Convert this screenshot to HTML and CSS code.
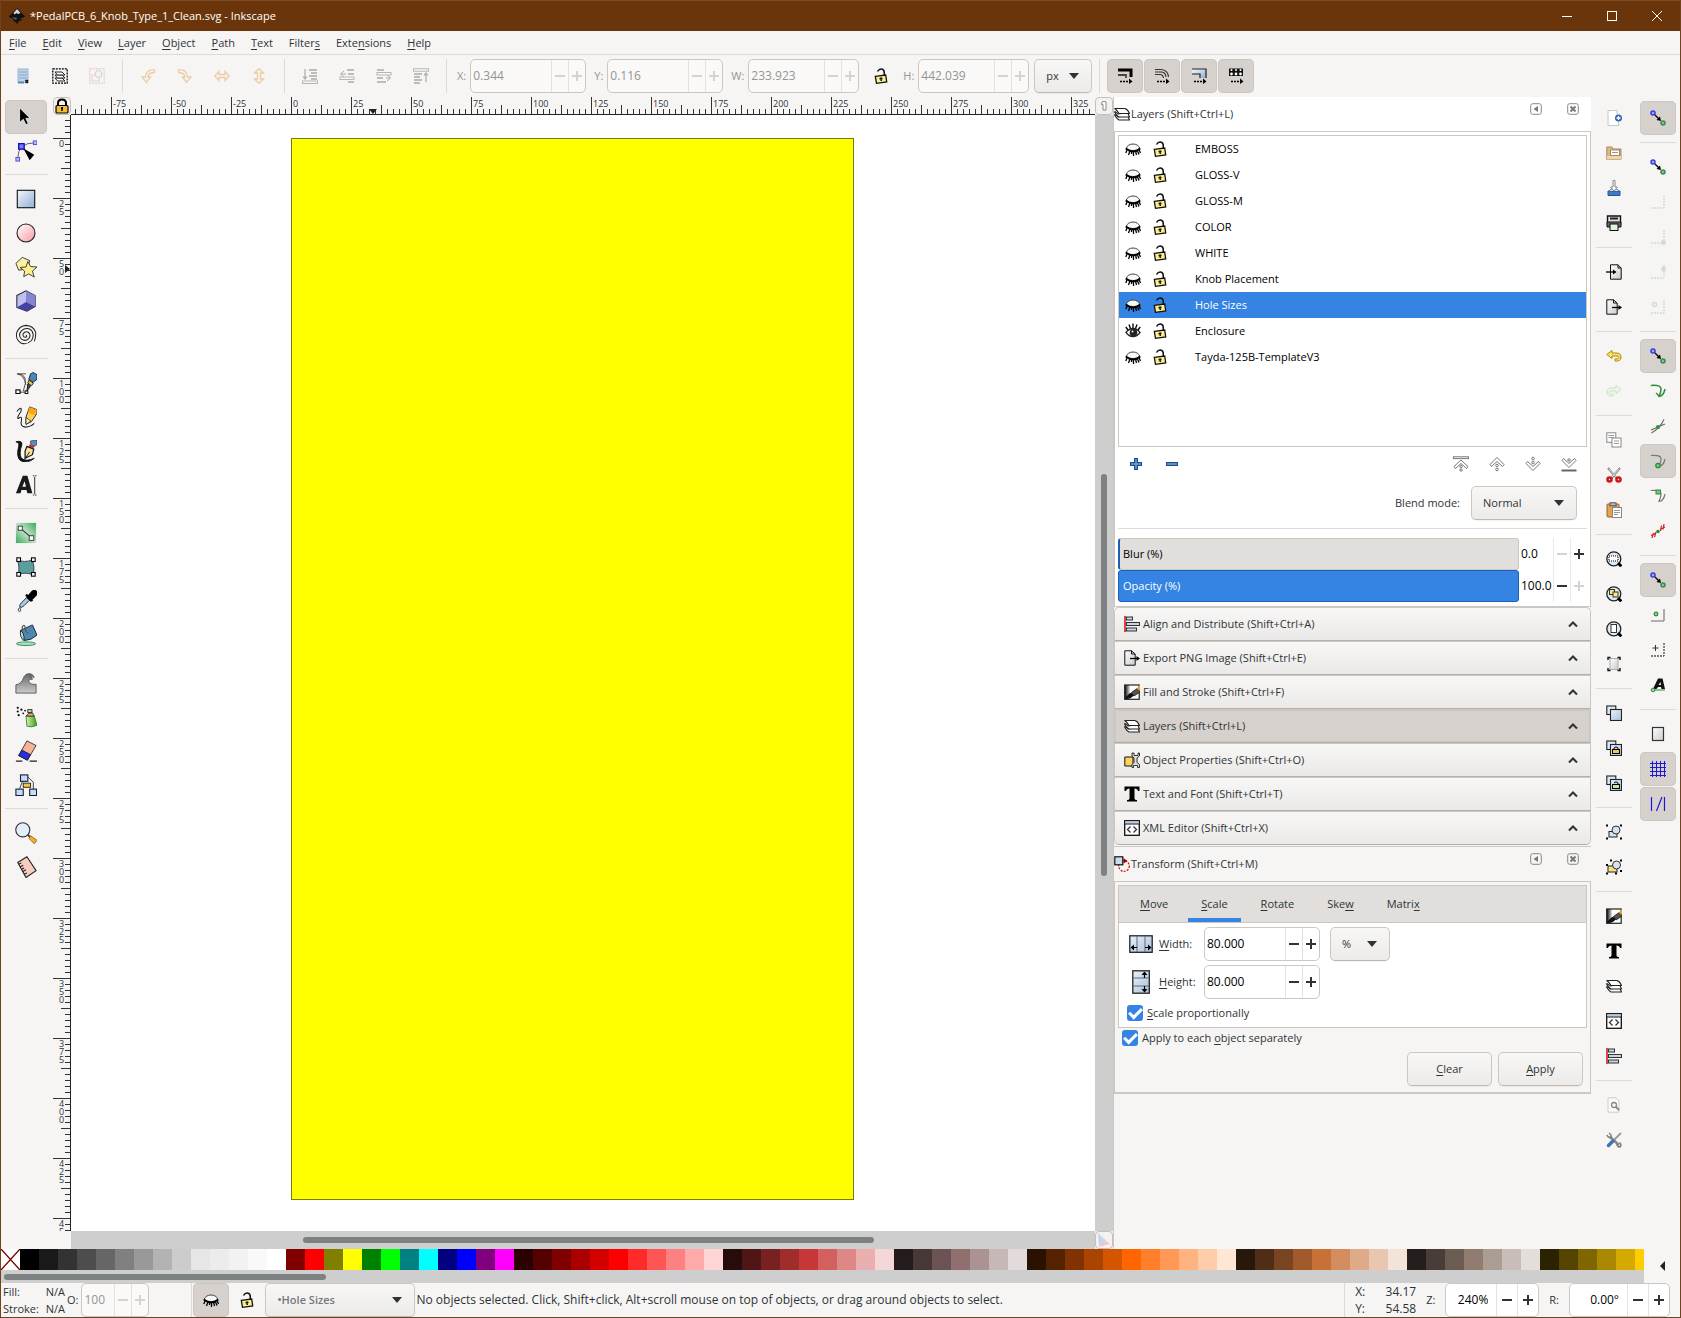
FILE: index.html
```html
<!DOCTYPE html>
<html lang="en">
<head>
<meta charset="utf-8">
<title>*PedalPCB_6_Knob_Type_1_Clean.svg - Inkscape</title>
<link rel="stylesheet" href="styles.css">
</head>
<body>
<svg class="defs" aria-hidden="true">
  <defs>
    <linearGradient id="gBlue" x1="1" y1="0" x2="0" y2="1"><stop offset="0" stop-color="#eef4fa"/><stop offset="1" stop-color="#8fb0d3"/></linearGradient>
    <linearGradient id="gRect" x1="0" y1="0" x2="1" y2="1"><stop offset="0" stop-color="#f4f8fc"/><stop offset="1" stop-color="#8fb0d3"/></linearGradient>
    <linearGradient id="gSky" x1="0" y1="0" x2="1" y2="1"><stop offset="0" stop-color="#e9f1f9"/><stop offset="1" stop-color="#a9c1dc"/></linearGradient>
    <linearGradient id="gPink" x1="0" y1="0" x2="1" y2="1"><stop offset="0" stop-color="#fff"/><stop offset="1" stop-color="#f59aa5"/></linearGradient>
    <linearGradient id="gGreen" x1="0" y1="1" x2="1" y2="0"><stop offset="0" stop-color="#3fa85f"/><stop offset=".5" stop-color="#bfe3c8"/><stop offset="1" stop-color="#3fa85f"/></linearGradient>
    <linearGradient id="gGray" x1="0" y1="0" x2="0" y2="1"><stop offset="0" stop-color="#666"/><stop offset="1" stop-color="#ccc"/></linearGradient>
    <linearGradient id="gPaper" x1="0" y1="0" x2="1" y2="1"><stop offset="0" stop-color="#fff"/><stop offset="1" stop-color="#ccc"/></linearGradient>
    <linearGradient id="gFill" x1="0" y1="0" x2="1" y2="0"><stop offset="0" stop-color="#000"/><stop offset=".4" stop-color="#fff"/></linearGradient>
    <linearGradient id="gSpray" x1="0" y1="0" x2="1" y2="0"><stop offset="0" stop-color="#d8f3b8"/><stop offset="1" stop-color="#3f9a08"/></linearGradient>
  </defs>
  <symbol id="eye-closed" viewBox="0 0 16 16"><path d="M1 7.500Q3 3 8 3T15 7.500Q12 9.600 8 9.600T1 7.500Z" fill="#f8f8f8" stroke="#444"/><path d="M.8 7.500Q4 10.300 8 10.300T15.200 7.500" fill="none" stroke="#000" stroke-width="1.800"/><path d="M2 9L.8 12M5 10L3.500 14M6.800 10L6.500 13M8.500 10V15M10.500 10L11.500 14M12.300 9.500L14 13.500M14 8.500L15.500 12" stroke="#000" stroke-width="1.300"/></symbol>
  <symbol id="eye-open" viewBox="0 0 16 16"><path d="M1 9.500Q4 5.500 8 5.500T15 9.500Q12 13.500 8 13.500T1 9.500Z" fill="#fff" stroke="#222" stroke-width="1.300"/><circle cx="8.500" cy="9.500" r="3.800" fill="#222"/><circle cx="7.500" cy="8.500" r="1" fill="#fff"/><path d="M3 7L.8 4M5.500 5.500L4 1.500M8 5V.5M10.500 5.500L12 1.500M13 7L15.200 4" stroke="#000" stroke-width="1.300"/></symbol>
  <symbol id="lock-open" viewBox="0 0 16 16"><path d="M4.500 3.500Q6 .8 8.500 1Q11.500 1.500 11.300 5V7.500" fill="none" stroke="#111" stroke-width="1.500"/><path d="M2.300 8.300L12.700 7L13.700 14L3.500 15.300Z" fill="#fdf08a" stroke="#111" stroke-width="1.300"/><path d="M8 9.500L8.300 13M6.500 10.700L9.500 10.400" stroke="#111" stroke-width="1.500"/></symbol>
  <symbol id="lock" viewBox="0 0 16 16"><path d="M4 8V5Q4 1.500 8 1.500T12 5V8" fill="none" stroke="#000" stroke-width="2"/><rect x="2" y="7.500" width="12" height="7.500" rx="1" fill="#f2bb35" stroke="#000" stroke-width="1.200"/><path d="M8 9V13M7 10.200H9" stroke="#000" stroke-width="1.500"/></symbol>
  <symbol id="layers" viewBox="0 0 16 16"><g fill="#fff" stroke="#222" stroke-width="1.100" stroke-linejoin="round"><path d="M.8 8.500Q3 9.500 4 11Q10 9.500 14 10.500L15.500 14H5Q3 13 .8 9.500Z"/><path d="M.8 5.500Q3 6.500 4 8Q10 6.500 14 7.500L15.500 11H5Q3 10 .8 6.500Z"/><path d="M.8 2.500H11Q14 3.500 15.500 7.500H5Q3 4 .8 2.500Z"/></g></symbol>
  <symbol id="sel-all" viewBox="0 0 16 16"><rect x=".8" y=".8" width="14.400" height="14.400" fill="none" stroke="#000" stroke-width="1.300" stroke-dasharray="2 1"/><g fill="#fff" stroke="#222"><path d="M3 10H10L13 13H5.500Z"/><path d="M3 7H10L13 10H5.500Z"/><path d="M3 4H10L13 7H5.500Z"/></g></symbol>
  <symbol id="doc-blue" viewBox="0 0 16 16"><rect x="3" y="1" width="10" height="13" fill="#bdd3ea" stroke="#9fb6cf"/><path d="M4 4H12M4 7H12M4 10H12" stroke="#86a5c8"/><path d="M3 14.500H9" stroke="#5b87bd" stroke-width="2"/><path d="M10.500 12L13 15M13 12L10.500 15" stroke="#111" stroke-width="1.400"/></symbol>
  <symbol id="desel" viewBox="0 0 16 16"><rect x=".8" y=".8" width="14.400" height="14.400" fill="none" stroke="#c66" stroke-dasharray="2 1"/><rect x="3" y="7" width="7" height="6" fill="#fff5dd" stroke="#b98"/><circle cx="9.500" cy="6" r="3.500" fill="#eee" stroke="#888"/></symbol>
  <symbol id="rot-l" viewBox="0 0 16 16"><path d="M14.500 2Q6 1 5.500 9H2L6.500 14.500L10.500 9H8Q8 5 14.500 4.500Z" fill="#fff0dc" stroke="#d9821f" stroke-width="1.300"/></symbol>
  <symbol id="rot-r" viewBox="0 0 16 16"><path d="M1.500 2Q10 1 10.500 9H14L9.500 14.500L5.500 9H8Q8 5 1.500 4.500Z" fill="#fff0dc" stroke="#d9821f" stroke-width="1.300"/></symbol>
  <symbol id="flip-h" viewBox="0 0 16 16"><path d="M.8 8L5 3.500V6.500H11V3.500L15.200 8L11 12.500V9.500H5V12.500Z" fill="#fff0dc" stroke="#d9821f" stroke-width="1.300"/></symbol>
  <symbol id="flip-v" viewBox="0 0 16 16"><path d="M8 .8L3.500 5H6.500V11H3.500L8 15.200L12.500 11H9.500V5H12.500Z" fill="#fff0dc" stroke="#d9821f" stroke-width="1.300"/></symbol>
  <symbol id="to-bottom" viewBox="0 0 16 16"><path d="M3 1V11M1 8.500L3 11L5 8.500" fill="none" stroke="#222" stroke-width="1.200"/><path d="M7 2H15M9 5H15M7 8H15M9 11H15" stroke="#555" stroke-width="2"/><rect x=".5" y="13" width="15" height="2.500" fill="#fff" stroke="#444"/></symbol>
  <symbol id="lower" viewBox="0 0 16 16"><path d="M5 3L1.500 6L5 9M2 6H7" fill="none" stroke="#222"/><path d="M8 2H15M9 6H15M9 14H15" stroke="#555" stroke-width="2"/><rect x="1" y="9" width="14" height="2.500" fill="#fff" stroke="#444"/></symbol>
  <symbol id="raise" viewBox="0 0 16 16"><path d="M11 7L14.500 10L11 13M10 10H14" fill="none" stroke="#222"/><path d="M1 2H8M1 10H7M1 14H10" stroke="#555" stroke-width="2"/><rect x="1" y="4.500" width="14" height="2.500" fill="#fff" stroke="#444"/></symbol>
  <symbol id="to-top" viewBox="0 0 16 16"><path d="M13 14V5M11 7.500L13 5L15 7.500" fill="none" stroke="#222" stroke-width="1.200"/><path d="M1 6H9M1 9H7M1 12H9M1 15H7" stroke="#555" stroke-width="2"/><rect x=".5" y=".7" width="15" height="2.500" fill="#fff" stroke="#444"/></symbol>
  <symbol id="aff-stroke" viewBox="0 0 16 16"><path d="M1 2H14V9" fill="none" stroke="#000" stroke-width="3"/><path d="M1 7H9V10" fill="none" stroke="#444" stroke-width="1.800"/><path d="M3 13.500H12" stroke="#000" stroke-width="1.600" stroke-dasharray="2 1"/><path d="M12 10.500L15.500 13.500L12 16Z"/></symbol>
  <symbol id="aff-corner" viewBox="0 0 16 16"><path d="M1 1.500H7Q14 2 14.500 9M1 6.500H6Q9 6.500 9.500 10M1 4H7Q11.500 4 12 9" fill="none" stroke="#333" stroke-width="1.100"/><path d="M3 13.500H12" stroke="#000" stroke-width="1.600" stroke-dasharray="2 1"/><path d="M12 10.500L15.500 13.500L12 16Z"/></symbol>
  <symbol id="aff-grad" viewBox="0 0 16 16"><path d="M1 1H15V10H9V6H1Z" fill="url(#gRect)"/><path d="M1 1H15V10M1 6H9V10" fill="none" stroke="#222" stroke-width="1.200"/><path d="M3 13.500H12" stroke="#000" stroke-width="1.600" stroke-dasharray="2 1"/><path d="M12 10.500L15.500 13.500L12 16Z"/></symbol>
  <symbol id="aff-patt" viewBox="0 0 16 16"><path d="M1 .5H15V8H1Z" fill="#111"/><g fill="#fff"><circle cx="3.500" cy="2" r="1"/><circle cx="8" cy="2" r="1"/><circle cx="12.500" cy="2" r="1"/><circle cx="3.500" cy="6" r="1.400"/><circle cx="8" cy="6" r="1.400"/><circle cx="12.500" cy="6" r="1.400"/></g><path d="M3 13.500H12" stroke="#000" stroke-width="1.600" stroke-dasharray="2 1"/><path d="M12 10.500L15.500 13.500L12 16Z"/></symbol>

  <symbol id="t-select" viewBox="0 0 24 24"><path d="M5 2V18L9 14.500L12 20.500L14.500 19L11.800 13.500H16.500Z" fill="#000" stroke="#fff" stroke-width=".8"/></symbol>
  <symbol id="t-node" viewBox="0 0 24 24"><path d="M3 20Q3 3 22 3" fill="none" stroke="#555"/><g fill="#b8b8ff" stroke="#4a4ad8"><rect x="1" y="19" width="4" height="4"/><rect x="20" y="1" width="4" height="4"/></g><rect x="4" y="4" width="6" height="6" fill="#7a7af0" stroke="#1010d0" stroke-width="1.500"/><path d="M9 9L21 16L16 22Z"/></symbol>
  <symbol id="t-rect" viewBox="0 0 24 24"><rect x="2.500" y="2.500" width="19" height="19" fill="url(#gRect)" stroke="#111" stroke-width="1.200"/></symbol>
  <symbol id="t-ellipse" viewBox="0 0 24 24"><circle cx="12" cy="12" r="9.800" fill="url(#gPink)" stroke="#222" stroke-width="1.200"/></symbol>
  <symbol id="t-star" viewBox="0 0 24 24"><g stroke="#333" stroke-linejoin="round"><path d="M1 8L8 1.500L16 5L14 14L4 15.500Z" fill="#fdf2a0"/><path d="M14 6L17 11.500L24 12L19 16.500L21 23L15 19.500L9.500 22.500L10.500 16.500L5.500 12.500L12 12Z" fill="#fdf08c"/></g></symbol>
  <symbol id="t-box" viewBox="0 0 24 24"><path d="M2 6L12 1L22 6V18L13 23L2 19Z" fill="#c0c0ee" stroke="#223" stroke-width="1.100"/><path d="M12 1V13L22 18V6Z" fill="#8585d0"/><path d="M12 13L22 18L13 23L2 19Z" fill="#4343a0"/></symbol>
  <symbol id="t-spiral" viewBox="0 0 24 24"><path d="M12 12Q14 14 11 14.500Q8 14 9 10.500Q11 7.500 14.500 9Q18 12 15 16Q11 19.500 7 16.500Q3 12 7 7.500Q12 3 17.500 6.500Q22 11 18 18Q13 23 7 21Q0 17 2 9Q5 2 12 1.500Q20 2 22.500 9Q23 14 21 19" fill="none" stroke="#222" stroke-width="1.100"/></symbol>
  <symbol id="t-pen" viewBox="0 0 24 24"><path d="M3 2Q16 2 9 21M2 2Q10 3 12 14M5 22H12M3 2H12" fill="none" stroke="#444"/><rect x="1" y="19.500" width="4.500" height="4" fill="#fff" stroke="#000" stroke-width="1.200"/><rect x="11" y="20.500" width="3" height="3" fill="#fff" stroke="#000"/><path d="M17 2L20 .5L24 3V8L20 11L15 8Z" fill="#4a87b8" stroke="#123"/><path d="M15 9L20 12L18 15L14 12Z" fill="#f3d344" stroke="#222"/><path d="M14 13L17 15L13 21Z" fill="#555" stroke="#111"/></symbol>
  <symbol id="t-pencil" viewBox="0 0 24 24"><path d="M2 6Q8 -1 6.500 6Q1 14 4 13.500Q8 10 7 16Q5 22 11 23Q17 23 21 19" fill="none" stroke="#222" stroke-width="1.200"/><path d="M16 1L24 4V8L18 17L12 20V12Z" fill="#fbd34c" stroke="#222"/><path d="M16 1L24 4L21 10L14 7Z" fill="#f9a51a"/><path d="M12 12.500L17.500 16.500L12 20Z" fill="#fbeacb" stroke="#222" stroke-width=".8"/></symbol>
  <symbol id="t-callig" viewBox="0 0 24 24"><path d="M1 2Q8 0 7.500 5Q4 15 7 20Q12 24 21 20Q14 26 6 22.500Q1 18 4 7Q5 3 1 2Z" fill="#111" stroke="#111"/><path d="M17 1L24 0V5L21 7L17 5Z" fill="#5a8fbb" stroke="#111" stroke-width=".6"/><path d="M16 5L21 7L20 9L15 7Z" fill="#c22"/><path d="M13 7L20.500 10L19 16L11 20L11 12Z" fill="#fbe0a0" stroke="#111" stroke-width="1.300"/><path d="M11 20L16 13" stroke="#111"/></symbol>
  <symbol id="t-text" viewBox="0 0 24 24"><path d="M1 21L8.500 2H13.500L19 21H13.500L12.500 17.500H7L6 21ZM8 14H12L10.500 8Z" fill="#1a1a1a" fill-rule="evenodd"/><path d="M21.500 3V22M19.500 2H21M22 2H23.500M19.500 23H21M22 23H23.500" stroke="#333" stroke-width="1.100"/></symbol>
  <symbol id="t-grad" viewBox="0 0 24 24"><rect x="1" y="1" width="22" height="22" fill="url(#gGreen)"/><path d="M6 7L18 17" stroke="#333" stroke-width="1.200"/><rect x="3.500" y="4.500" width="4.500" height="4.500" fill="#fff" stroke="#333"/><rect x="15.500" y="15" width="5" height="5" fill="#fff" stroke="#333"/></symbol>
  <symbol id="t-mesh" viewBox="0 0 24 24"><path d="M3 4Q10 8 19 4Q22 12 20 21Q13 17 4 20Q5 12 3 4Z" fill="#5a9f9d" stroke="#345"/><g fill="#fff" stroke="#000" stroke-width="1.200"><rect x="2" y="2" width="4" height="4"/><rect x="18" y="2" width="4" height="4"/><rect x="2" y="18" width="4" height="4"/><rect x="18" y="18" width="4" height="4"/></g></symbol>
  <symbol id="t-drop" viewBox="0 0 24 24"><path d="M13 8L7 14Q4 17 5.500 18.500Q7 20 10 17L16 11Z" fill="#a8c8e4" stroke="#123"/><path d="M12 5L19 12M14 8L19 2Q21 0 23 2Q24 4 22 6L17 11Z" stroke="#000" stroke-width="2.500"/><path d="M5 19Q7.500 23 5 23.500Q2 23 5 19Z" fill="#cfe3f5" stroke="#345"/></symbol>
  <symbol id="t-bucket" viewBox="0 0 24 24"><ellipse cx="12" cy="21.500" rx="10.500" ry="2" fill="#a9e0bd" stroke="#385"/><path d="M7 20V11L11 19Z" fill="#a9e0bd"/><path d="M6 7L19 1L24 12Q18 18 10 18Z" fill="#4f86ad" stroke="#123"/><path d="M6 7Q10 9 10 18Q5 15 6 7Z" fill="#b9e7c8" stroke="#123"/><path d="M8 8V3Q10 0 11 3Q11 8 14 10" fill="none" stroke="#555" stroke-width="1.300"/></symbol>
  <symbol id="t-tweak" viewBox="0 0 24 24"><path d="M1 23V14Q7 13 9 7Q11 1 17 2Q20 3 21 6Q18 4 16 5.500Q19 5.500 19 8Q15 7 15 10Q16 14 23 13.500V23Z" fill="url(#gGray)" stroke="#555"/></symbol>
  <symbol id="t-spray" viewBox="0 0 24 24"><path d="M12 11H21L24 21Q18 24 13 22Z" fill="url(#gSpray)" stroke="#384"/><path d="M13 10Q14 7 19 7.500L21 11H12Z" fill="#f0a848" stroke="#333"/><rect x="14" y="4" width="4.500" height="3" fill="#ddd" stroke="#222"/><g fill="#111"><circle cx="3" cy="2" r="1.200"/><circle cx="7" cy="4" r="1.200"/><circle cx="3" cy="6" r="1.200"/><circle cx="11" cy="5" r="1"/><circle cx="4" cy="10" r="1.200"/><circle cx="9" cy="8" r="1"/></g></symbol>
  <symbol id="t-eraser" viewBox="0 0 24 24"><path d="M13 1L23 6L13.500 22L4 17Z" fill="#f4b49a" stroke="#333"/><path d="M7.500 11L17 16L13.500 22L4 17Z" fill="#2b2bea" stroke="#222"/><path d="M1 23H8M16 23H24" stroke="#222" stroke-width="1.200"/></symbol>
  <symbol id="t-conn" viewBox="0 0 24 24"><path d="M9 6L5 16M11 4H15L20 9V17" fill="none" stroke="#333"/><g fill="#c9dcf3" stroke="#123" stroke-width="1.200"><rect x="6" y="1" width="8" height="7"/><rect x="1" y="16.500" width="8" height="7"/><rect x="16" y="16.500" width="7.500" height="7"/></g><rect x="9" y="10" width="8" height="4.500" fill="#fbc33c" stroke="#222"/></symbol>
  <symbol id="t-zoom" viewBox="0 0 24 24"><circle cx="8.500" cy="8.500" r="7.700" fill="#e4eefa" stroke="#333" stroke-width="1.200"/><path d="M14 14L17 17" stroke="#333" stroke-width="2"/><path d="M17 15L24 20L21 23.800L15.500 18Z" fill="#f8ae24" stroke="#963"/></symbol>
  <symbol id="t-measure" viewBox="0 0 24 24"><path d="M13 .8L23 16L12 23.500L3 7Z" fill="#f8cdbd" stroke="#222" stroke-width="1.200"/><path d="M4 9L7 7.500M5.500 12L9 10M7 14.500L10 13M8.500 17L12 15M10 20L13 18.500" stroke="#222" stroke-width="1.200"/></symbol>

  <symbol id="c-new" viewBox="0 0 16 16"><path d="M2 .5H11V6L13 15.500H2Z" fill="#fff" stroke="#c8c8c8"/><circle cx="12.500" cy="8" r="3.500" fill="#2f68ad"/><path d="M12.500 6V10M10.500 8H14.500" stroke="#fff" stroke-width="1.300"/></symbol>
  <symbol id="c-open" viewBox="0 0 16 16"><path d="M.8 2H6L7 4H15V14.500H.8Z" fill="#d9b98c" stroke="#a98a5e"/><rect x="4.500" y="5" width="9" height="5.500" fill="#fff" stroke="#a98a5e"/><path d="M6 7.500H12" stroke="#999"/><path d="M1 11H15V14.500H1Z" fill="#efd6ae"/></symbol>
  <symbol id="c-save" viewBox="0 0 16 16"><path d="M2 11H14V15.500H2Z" fill="#3d7cc9" stroke="#28568f"/><path d="M3 11L5 9H11L13 11" fill="#c9dcf3" stroke="#789"/><path d="M7 .5H9V7H11.500L8 11L4.500 7H7Z" fill="#fff" stroke="#888"/></symbol>
  <symbol id="c-print" viewBox="0 0 16 16"><path d="M1.500 1H14.500V9H1.500Z" fill="#ddd" stroke="#111" stroke-width="1.400"/><path d="M4 3.500H12" stroke="#222" stroke-width="2"/><path d="M1 7H15V12H1Z" fill="#666" stroke="#111"/><rect x="4" y="9" width="8" height="6.500" fill="#e3f2df" stroke="#111"/></symbol>
  <symbol id="c-import" viewBox="0 0 16 16"><path d="M4.500 .8H12L15.200 4V15.200H4.500Z" fill="url(#gPaper)" stroke="#111"/><path d="M12 .8V4H15" fill="none" stroke="#111"/><path d="M0 8H9" stroke="#000" stroke-width="1.300"/><path d="M7 5.500L10.500 8L7 10.500Z"/></symbol>
  <symbol id="c-export" viewBox="0 0 16 16"><path d="M.8 .8H7.500L11.200 4V15.200H.8Z" fill="url(#gPaper)" stroke="#111"/><path d="M7.500 .8V4H11" fill="none" stroke="#111"/><path d="M6 8.500H14" stroke="#000" stroke-width="1.300"/><path d="M12.500 6L16 8.500L12.500 11Z"/></symbol>
  <symbol id="c-undo" viewBox="0 0 16 16"><path d="M6 2.500V5H11Q15.500 5.500 15 10Q14.500 13.500 9 13V11Q12.500 11.500 12.800 9.500Q13 8 11 8H6V10.500L.8 6.500Z" fill="#f6e27a" stroke="#b08d00"/></symbol>
  <symbol id="c-redo" viewBox="0 0 16 16"><path d="M10 2.500V5H5Q.5 5.500 1 10Q1.500 13.500 7 13V11Q3.500 11.500 3.200 9.500Q3 8 5 8H10V10.500L15.200 6.500Z" fill="#edf7ea" stroke="#c5e3be"/></symbol>
  <symbol id="c-copy" viewBox="0 0 16 16"><g fill="#fff" stroke="#888"><rect x=".8" y=".8" width="9" height="9.500"/><rect x="6" y="6" width="9" height="9"/></g><path d="M2.500 3.500H8M2.500 5.500H8M8 9H13M8 11.500H13" stroke="#999"/></symbol>
  <symbol id="c-cut" viewBox="0 0 16 16"><path d="M2 1L10.500 11M14 1L5.500 11" stroke="#888" stroke-width="2"/><path d="M3 2L10 10M13 2L6 10" stroke="#eee" stroke-width=".8"/><g fill="none" stroke="#d01818" stroke-width="2.600"><circle cx="3.500" cy="12.500" r="2"/><circle cx="12.500" cy="12.500" r="2"/></g></symbol>
  <symbol id="c-paste" viewBox="0 0 16 16"><rect x="1" y="2" width="12" height="13" rx="1" fill="#e3a54e" stroke="#96652a"/><rect x="4" y=".8" width="6" height="3" fill="#bbb" stroke="#555"/><rect x="6.500" y="5.500" width="9" height="10" fill="#fff" stroke="#888"/><path d="M8 8.500H14M8 10.500H14M8 12.500H12" stroke="#999"/></symbol>
  <symbol id="zoom-base" viewBox="0 0 16 16"><circle cx="7.800" cy="7.800" r="7" fill="#dfeaf5" stroke="#222" stroke-width="1.300"/><path d="M12 12L15.300 15.300" stroke="#000" stroke-width="3"/></symbol>
  <symbol id="c-zsel" viewBox="0 0 16 16"><use href="#zoom-base"/><rect x="3" y="5" width="9" height="5" fill="#fff" stroke="#000" stroke-dasharray="1 1"/></symbol>
  <symbol id="c-zdraw" viewBox="0 0 16 16"><use href="#zoom-base"/><g fill="#fbe68a" stroke="#333"><rect x="3.500" y="3.500" width="5" height="5"/><rect x="7" y="6" width="5" height="5"/></g></symbol>
  <symbol id="c-zpage" viewBox="0 0 16 16"><use href="#zoom-base"/><rect x="5" y="3.500" width="5.500" height="8" fill="#fff" stroke="#333"/></symbol>
  <symbol id="c-zwidth" viewBox="0 0 16 16"><rect x="4" y="2.500" width="8" height="11" fill="url(#gPaper)" stroke="#aaa"/><path d="M2 4V1.500H4.500M11.500 1.500H14V4M2 12V14.500H4.500M11.500 14.500H14V12" fill="none" stroke="#111" stroke-width="1.400"/></symbol>
  <symbol id="c-dup" viewBox="0 0 16 16"><g fill="#dbe7f4" stroke="#222" stroke-width="1.100"><rect x=".8" y="1" width="9" height="8.500"/><rect x="4.500" y="4.500" width="11" height="11" fill="url(#gSky)"/></g></symbol>
  <symbol id="c-clone" viewBox="0 0 16 16"><use href="#c-dup"/><path d="M8 10V8Q10 5.500 12 8V10" fill="none" stroke="#000"/><rect x="6.500" y="9.500" width="7" height="4" fill="#f5c64a" stroke="#000"/></symbol>
  <symbol id="c-unclone" viewBox="0 0 16 16"><use href="#c-dup"/><path d="M8 8Q10 5.500 12 8V10" fill="none" stroke="#000"/><rect x="6.500" y="9.500" width="7" height="4" fill="#c9e4a0" stroke="#000"/></symbol>
  <symbol id="c-group" viewBox="0 0 16 16"><rect x="3" y="7.500" width="8" height="5.500" fill="#d4e2f2" stroke="#222"/><circle cx="10" cy="6" r="4" fill="#d4e2f2" stroke="#333"/><path d="M0 1.500H2M14 1.500H16M0 14.500H2M14 14.500H16" stroke="#000" stroke-width="2"/></symbol>
  <symbol id="c-ungroup" viewBox="0 0 16 16"><rect x="2" y="7" width="9" height="6" fill="#fbe07a" stroke="#222"/><circle cx="10.500" cy="6" r="4" fill="#d4e2f2" stroke="#333"/><path d="M0 6H2M14 1.500H16M4 1.500H6M0 14.500H2M9 14.500H11M14 12H16" stroke="#000" stroke-width="2"/></symbol>
  <symbol id="c-fill" viewBox="0 0 16 16"><rect x=".7" y="1" width="14.500" height="14.300" fill="url(#gFill)" stroke="#222" stroke-width="1.200"/><path d="M1 15Q3 11 6 9Q8 8.500 10 11Q7 15.500 1 15Z" fill="#111"/><path d="M7.500 8.500L14 4L16 6V8L10 12Z" fill="#555" stroke="#111" stroke-width=".8"/><path d="M16 1V7L13 4.500Z" fill="#f2a81c"/></symbol>
  <symbol id="c-text" viewBox="0 0 16 16"><path d="M.5 .5H15.500V5H14Q13.500 2.500 10.500 2.500V12.500Q10.500 14 13 14V15.500H3V14Q5.500 14 5.500 12.500V2.500Q2.500 2.500 2 5H.5Z"/></symbol>
  <symbol id="c-xml" viewBox="0 0 16 16"><rect x=".7" y=".7" width="14.600" height="14.600" fill="#fff" stroke="#111" stroke-width="1.300"/><path d="M1 2.500H15" stroke="#b7cbe3" stroke-width="2"/><path d="M1 4H15" stroke="#111"/><path d="M6.500 6.500L3.500 9.500L6.500 12.500M9.500 6.500L12.500 9.500L9.500 12.500" fill="none" stroke="#333" stroke-width="1.300"/></symbol>
  <symbol id="c-align" viewBox="0 0 16 16"><path d="M1 0V16" stroke="#c00" stroke-width="1.400"/><g fill="#c4d6e8" stroke="#333"><rect x="2.500" y="1" width="6" height="3"/><rect x="2.500" y="6.500" width="13" height="3"/><rect x="2.500" y="12" width="10" height="3"/></g></symbol>
  <symbol id="c-docprop" viewBox="0 0 16 16"><path d="M2 .8H10L13 4V15.200H2Z" fill="#fafafa" stroke="#ccc"/><circle cx="8" cy="8" r="2.500" fill="none" stroke="#888" stroke-width="1.300"/><path d="M9.500 9.500L13 13" stroke="#888" stroke-width="2"/></symbol>
  <symbol id="c-prefs" viewBox="0 0 16 16"><path d="M4 5L13 13" stroke="#888" stroke-width="2.500"/><path d="M1 3Q2 6 5 5.500Q6 3 3 1M11 12Q11 15 14 15Q16 13 13.500 10.500" fill="none" stroke="#777" stroke-width="1.400"/><path d="M15 1L8 8" stroke="#999" stroke-width="1.800"/><path d="M7 9L2.500 13.500" stroke="#3f74b8" stroke-width="3.500" stroke-linecap="round"/></symbol>
  <symbol id="objprop" viewBox="0 0 16 16"><path d="M.8 5H9V14H.8Z" fill="#fbd35b" stroke="#111"/><path d="M8 1V4L10 6V10.500L8 12.500V15.500H9.500V13.500H13.500V15.500H15.500V12.500L13 10.500V6L15.500 4V1H14V3.500H10V1Z" fill="#ddd" stroke="#222" stroke-width=".9"/></symbol>
  <symbol id="transform" viewBox="0 0 16 16"><circle cx="10" cy="10" r="5.300" fill="none" stroke="#d00" stroke-width="1.200" stroke-dasharray="2 1.200"/><rect x=".8" y=".8" width="8" height="8" fill="#c9dcee" stroke="#111" stroke-width="1.200"/><path d="M9.500 2L13.500 5L9.500 7.500Z" fill="#a00"/></symbol>

  <symbol id="s-snap" viewBox="0 0 16 16"><circle cx="3" cy="3" r="2" fill="#a6a6f5" stroke="#3a3ae0" stroke-width="1.500"/><circle cx="13" cy="13" r="2" fill="#8fbf9d" stroke="#3a8a52" stroke-width="1.500"/><path d="M5 5L9 9" stroke="#000" stroke-width="1.200"/><path d="M11 11L6.500 10L10 6.500Z"/></symbol>
  <symbol id="s-box" viewBox="0 0 16 16"><path d="M14 1V14M1 14H14" fill="none" stroke="#7fa98a" stroke-width="1.500" stroke-dasharray="2 1"/></symbol>
  <symbol id="s-box2" viewBox="0 0 16 16"><use href="#s-box"/><circle cx="13.500" cy="13.500" r="2.500" fill="#7fa98a"/></symbol>
  <symbol id="s-box3" viewBox="0 0 16 16"><use href="#s-box"/><circle cx="13.500" cy="5" r="2.500" fill="#7fa98a"/></symbol>
  <symbol id="s-box4" viewBox="0 0 16 16"><use href="#s-box"/><circle cx="4.500" cy="5.500" r="2" fill="none" stroke="#7fa98a" stroke-width="1.500"/></symbol>
  <symbol id="s-path" viewBox="0 0 16 16"><path d="M.8 2.500Q11 1.500 11 6Q11 9 9 13.500M6 10Q8 11.500 9 13.500Q13.500 13 15 6" fill="none" stroke="#2a8f35" stroke-width="1.500"/></symbol>
  <symbol id="s-inter" viewBox="0 0 16 16"><path d="M1 12L15 6M1.500 15Q10 10 14 1.500" fill="none" stroke="#666" stroke-width="1.100"/><circle cx="8" cy="9" r="2" fill="#2a8f35"/></symbol>
  <symbol id="s-cusp" viewBox="0 0 16 16"><path d="M.8 2.500Q11 1.500 11 6Q11 9 9 13M9 13Q13.500 13 15 6" fill="none" stroke="#777" stroke-width="1.200"/><circle cx="8" cy="12.500" r="2.200" fill="#7fbf8a" stroke="#2a8f35" stroke-width="1.300"/></symbol>
  <symbol id="s-smooth" viewBox="0 0 16 16"><path d="M.8 2.500Q11 1.500 11 6Q11 9 9 13.500Q13.500 13 15 6" fill="none" stroke="#777" stroke-width="1.200"/><rect x="6" y="2" width="4.500" height="4" fill="#7fbf8a" stroke="#2a8f35"/></symbol>
  <symbol id="s-mid" viewBox="0 0 16 16"><path d="M1 12.500L6 10M10 6.500L15 4M3.500 10L2 15M6 9L4.500 14M11.500 2.500L10.500 8M14 1L13 6.500" stroke="#c22" stroke-width="1.200"/><circle cx="8" cy="8.500" r="1.800" fill="#2a8f35"/></symbol>
  <symbol id="s-obj" viewBox="0 0 16 16"><path d="M14 2V14M1 14H14" fill="none" stroke="#999" stroke-width="1.600"/><circle cx="6" cy="7" r="1.800" fill="#9fd3a9" stroke="#2a8f35" stroke-width="1.300"/></symbol>
  <symbol id="s-rotc" viewBox="0 0 16 16"><path d="M14 1V14M1 14H14" fill="none" stroke="#555" stroke-width="1.400" stroke-dasharray="2 1"/><path d="M5.500 3V9M2.500 6H8.500" stroke="#333"/></symbol>
  <symbol id="s-text" viewBox="0 0 16 16"><path d="M3 12L8 1.500H12.500L15 12H11.500L11 10H8L6.500 12ZM8.500 8H11L10.500 5Z" fill="#111" fill-rule="evenodd"/><path d="M3 13H15" stroke="#2a8f35"/><circle cx="3" cy="13" r="1.800" fill="#9fd3a9" stroke="#2a8f35"/></symbol>
  <symbol id="s-page" viewBox="0 0 16 16"><rect x="2.500" y="1.500" width="11" height="13" fill="url(#gPaper)" stroke="#333" stroke-width="1.200"/></symbol>
  <symbol id="s-grid" viewBox="0 0 16 16"><path d="M2.500 0V16M6.500 0V16M10.500 0V16M14.500 0V16M0 2.500H16M0 6.500H16M0 10.500H16M0 14.500H16" stroke="#1a1ad6"/></symbol>
  <symbol id="s-guide" viewBox="0 0 16 16"><path d="M1.500 1V15M14.500 1V15M6.500 15L12 1" stroke="#1a1ad6" stroke-width="1.200"/></symbol>
  <symbol id="chev" viewBox="0 0 10 10"><path d="M1 7.500L5 3.500L9 7.500" fill="none" stroke="#2e3436" stroke-width="2"/></symbol>
  <symbol id="minus" viewBox="0 0 10 10"><path d="M0 5H10" stroke="currentColor" stroke-width="2"/></symbol>
  <symbol id="plus" viewBox="0 0 10 10"><path d="M0 5H10M5 0V10" stroke="currentColor" stroke-width="2"/></symbol>
  <symbol id="iconify" viewBox="0 0 12 12"><rect x=".7" y=".7" width="10.600" height="10.600" rx="2" fill="none" stroke="#888"/><path d="M8 3V9L3.500 6Z" fill="#777"/></symbol>
  <symbol id="close-dlg" viewBox="0 0 12 12"><rect x=".7" y=".7" width="10.600" height="10.600" rx="2" fill="none" stroke="#888"/><path d="M3.500 3.500L8.500 8.500M8.500 3.500L3.500 8.500" stroke="#777" stroke-width="2"/></symbol>
</svg>

<header class="titlebar">
  <svg class="icon" viewBox="0 0 16 16"><path d="M8 0L16 8.500Q14 10.500 11 10L13 12Q10 12.500 9 14.500L8 16L6.500 14Q3 12.500 5 10.500Q1 10.500 0 8.500Z" fill="#111"/><path d="M8 1L11.500 5L9 6L7.500 5L5.500 6.500L4.500 5Z" fill="#cfd8e3"/><path d="M3 9L8 10L7 12Z" fill="#567"/></svg>
  <h1>*PedalPCB_6_Knob_Type_1_Clean.svg - Inkscape</h1>
  <div class="winbtns">
    <button aria-label="Minimize"><svg viewBox="0 0 10 10"><path d="M0 5.500H10"/></svg></button>
    <button aria-label="Maximize"><svg viewBox="0 0 10 10"><rect x=".5" y=".5" width="9" height="9"/></svg></button>
    <button aria-label="Close"><svg viewBox="0 0 10 10"><path d="M0 0L10 10M10 0L0 10"/></svg></button>
  </div>
</header>

<nav class="menubar">
  <button><u>F</u>ile</button><button><u>E</u>dit</button><button><u>V</u>iew</button><button><u>L</u>ayer</button><button><u>O</u>bject</button><button><u>P</u>ath</button><button><u>T</u>ext</button><button>Filter<u>s</u></button><button>Exte<u>n</u>sions</button><button><u>H</u>elp</button>
</nav>

<div class="toolbar">
  <button class="tool" aria-label="Select all"><svg class="icon"><use href="#doc-blue"/></svg></button>
  <button class="tool" aria-label="Select all in all layers"><svg class="icon"><use href="#sel-all"/></svg></button>
  <button class="tool" disabled aria-label="Deselect"><svg class="icon"><use href="#desel"/></svg></button>
  <i class="vsep"></i>
  <button class="tool" disabled aria-label="Rotate left"><svg class="icon"><use href="#rot-l"/></svg></button>
  <button class="tool" disabled aria-label="Rotate right"><svg class="icon"><use href="#rot-r"/></svg></button>
  <button class="tool" disabled aria-label="Flip horizontal"><svg class="icon"><use href="#flip-h"/></svg></button>
  <button class="tool" disabled aria-label="Flip vertical"><svg class="icon"><use href="#flip-v"/></svg></button>
  <i class="vsep"></i>
  <button class="tool" disabled aria-label="Lower to bottom"><svg class="icon"><use href="#to-bottom"/></svg></button>
  <button class="tool" disabled aria-label="Lower"><svg class="icon"><use href="#lower"/></svg></button>
  <button class="tool" disabled aria-label="Raise"><svg class="icon"><use href="#raise"/></svg></button>
  <button class="tool" disabled aria-label="Raise to top"><svg class="icon"><use href="#to-top"/></svg></button>
  <i class="vsep"></i>
  <label class="dim" for="px">X:</label>
  <div class="spin off"><input id="px" value="0.344" disabled><button disabled aria-label="Less"><svg><use href="#minus"/></svg></button><button disabled aria-label="More"><svg><use href="#plus"/></svg></button></div>
  <label class="dim" for="py">Y:</label>
  <div class="spin off"><input id="py" value="0.116" disabled><button disabled aria-label="Less"><svg><use href="#minus"/></svg></button><button disabled aria-label="More"><svg><use href="#plus"/></svg></button></div>
  <label class="dim" for="pw">W:</label>
  <div class="spin off short"><input id="pw" value="233.923" disabled><button disabled aria-label="Less"><svg><use href="#minus"/></svg></button><button disabled aria-label="More"><svg><use href="#plus"/></svg></button></div>
  <button class="tool lockwh" aria-label="Lock ratio"><svg class="icon"><use href="#lock-open"/></svg></button>
  <label class="dim" for="ph">H:</label>
  <div class="spin off short"><input id="ph" value="442.039" disabled><button disabled aria-label="Less"><svg><use href="#minus"/></svg></button><button disabled aria-label="More"><svg><use href="#plus"/></svg></button></div>
  <div class="combo unit"><select aria-label="Unit"><option>px</option></select></div>
  <i class="vsep"></i>
  <button class="tool on" aria-label="Scale stroke width"><svg class="icon"><use href="#aff-stroke"/></svg></button>
  <button class="tool on" aria-label="Scale corners"><svg class="icon"><use href="#aff-corner"/></svg></button>
  <button class="tool on" aria-label="Move gradients"><svg class="icon"><use href="#aff-grad"/></svg></button>
  <button class="tool on" aria-label="Move patterns"><svg class="icon"><use href="#aff-patt"/></svg></button>
</div>

<main class="work">
  <div class="toolbox">
    <button class="on" aria-label="Select"><svg><use href="#t-select"/></svg></button>
    <button aria-label="Node"><svg><use href="#t-node"/></svg></button>
    <hr>
    <button aria-label="Rectangle"><svg><use href="#t-rect"/></svg></button>
    <button aria-label="Ellipse"><svg><use href="#t-ellipse"/></svg></button>
    <button aria-label="Star"><svg><use href="#t-star"/></svg></button>
    <button aria-label="3D box"><svg><use href="#t-box"/></svg></button>
    <button aria-label="Spiral"><svg><use href="#t-spiral"/></svg></button>
    <hr>
    <button aria-label="Pen"><svg><use href="#t-pen"/></svg></button>
    <button aria-label="Pencil"><svg><use href="#t-pencil"/></svg></button>
    <button aria-label="Calligraphy"><svg><use href="#t-callig"/></svg></button>
    <button aria-label="Text"><svg><use href="#t-text"/></svg></button>
    <hr>
    <button aria-label="Gradient"><svg><use href="#t-grad"/></svg></button>
    <button aria-label="Mesh"><svg><use href="#t-mesh"/></svg></button>
    <button aria-label="Dropper"><svg><use href="#t-drop"/></svg></button>
    <button aria-label="Paint bucket"><svg><use href="#t-bucket"/></svg></button>
    <hr>
    <button aria-label="Tweak"><svg><use href="#t-tweak"/></svg></button>
    <button aria-label="Spray"><svg><use href="#t-spray"/></svg></button>
    <button aria-label="Eraser"><svg><use href="#t-eraser"/></svg></button>
    <button aria-label="Connector"><svg><use href="#t-conn"/></svg></button>
    <hr>
    <button aria-label="Zoom"><svg><use href="#t-zoom"/></svg></button>
    <button aria-label="Measure"><svg><use href="#t-measure"/></svg></button>
  </div>

  <div class="desk">
    <button class="corner" aria-label="Lock guides"><svg class="icon"><use href="#lock"/></svg></button>
    <div class="ruler-h"><div class="labels" id="hlabels"></div><i class="mark"></i></div>
    <button class="corner" aria-label="Sticky zoom"><svg class="icon" viewBox="0 0 16 16"><path d="M6 4Q8 2.500 10 4V12H7V6.500H5.500Z" fill="#fff" stroke="#888"/></svg></button>
    <div class="ruler-v"><div class="labels" id="vlabels"></div><i class="mark"></i></div>
    <div class="canvas"><div class="sheet"></div></div>
    <div class="scroll-v"><i></i></div>
    <div class="blank"></div>
    <div class="scroll-h"><i></i></div>
    <button class="corner" aria-label="Color management"><svg class="icon faded" viewBox="0 0 16 16"><path d="M2 1L14 12L8 8Z" fill="#8de08d"/><path d="M2 1L8 8L3 15Z" fill="#8fb8ef"/><path d="M3 15L8 8L14 12Z" fill="#f08fc4"/></svg></button>
  </div>

  <aside class="dock">
    <section class="dialog layers">
      <header><svg class="icon"><use href="#layers"/></svg><h2>Layers (Shift+Ctrl+L)</h2><button aria-label="Iconify"><svg><use href="#iconify"/></svg></button><button aria-label="Close"><svg><use href="#close-dlg"/></svg></button></header>
      <div class="frame">
        <ul class="layerlist">
          <li><svg class="icon"><use href="#eye-closed"/></svg><svg class="icon"><use href="#lock-open"/></svg><span>EMBOSS</span></li>
          <li><svg class="icon"><use href="#eye-closed"/></svg><svg class="icon"><use href="#lock-open"/></svg><span>GLOSS-V</span></li>
          <li><svg class="icon"><use href="#eye-closed"/></svg><svg class="icon"><use href="#lock-open"/></svg><span>GLOSS-M</span></li>
          <li><svg class="icon"><use href="#eye-closed"/></svg><svg class="icon"><use href="#lock-open"/></svg><span>COLOR</span></li>
          <li><svg class="icon"><use href="#eye-closed"/></svg><svg class="icon"><use href="#lock-open"/></svg><span>WHITE</span></li>
          <li><svg class="icon"><use href="#eye-closed"/></svg><svg class="icon"><use href="#lock-open"/></svg><span>Knob Placement</span></li>
          <li class="sel"><svg class="icon"><use href="#eye-closed"/></svg><svg class="icon"><use href="#lock-open"/></svg><span>Hole Sizes</span></li>
          <li><svg class="icon"><use href="#eye-open"/></svg><svg class="icon"><use href="#lock-open"/></svg><span>Enclosure</span></li>
          <li><svg class="icon"><use href="#eye-closed"/></svg><svg class="icon"><use href="#lock-open"/></svg><span>Tayda-125B-TemplateV3</span></li>
        </ul>
        <div class="layerbtns">
          <button aria-label="Add layer"><svg class="icon" viewBox="0 0 16 16"><path d="M8 2V14M2 8H14" stroke="#204a87" stroke-width="4"/><path d="M8 3V13M3 8H13" stroke="#5a8fd0" stroke-width="2"/></svg></button>
          <button aria-label="Remove layer"><svg class="icon" viewBox="0 0 16 16"><path d="M2 8H14" stroke="#204a87" stroke-width="4"/><path d="M3 8H13" stroke="#5a8fd0" stroke-width="2"/></svg></button>
          <span class="grow"></span>
          <button aria-label="Raise to top"><svg class="icon" viewBox="0 0 16 16"><g fill="#fff" stroke="#777"><rect x=".5" y=".8" width="15" height="1.800"/><path d="M8 4L15 10.500L13.500 12.500L8 7.500L2.500 12.500L1 10.500Z"/><circle cx="8" cy="10.500" r="1.200"/><circle cx="8" cy="14" r="1.200"/></g></svg></button>
          <button aria-label="Raise"><svg class="icon" viewBox="0 0 16 16"><g fill="#fff" stroke="#777"><path d="M8 1.500L15 8.500L13.500 10.500L8 5.500L2.500 10.500L1 8.500Z"/><circle cx="8" cy="9.500" r="1.300"/><circle cx="8" cy="13.500" r="1.300"/></g></svg></button>
          <button aria-label="Lower"><svg class="icon" viewBox="0 0 16 16"><g fill="#fff" stroke="#777"><path d="M8 14.500L15 7.500L13.500 5.500L8 10.500L2.500 5.500L1 7.500Z"/><circle cx="8" cy="6.500" r="1.300"/><circle cx="8" cy="2.500" r="1.300"/></g></svg></button>
          <button aria-label="Lower to bottom"><svg class="icon" viewBox="0 0 16 16"><g fill="#fff" stroke="#777"><path d="M8 11.500L15 4.500L13.500 2.500L8 7.500L2.500 2.500L1 4.500Z"/><circle cx="8" cy="4" r="1.200"/></g><path d="M.5 14.500H15.500" stroke="#666" stroke-width="2"/></svg></button>
        </div>
        <div class="blend"><label for="blend">Blend mode:</label><div class="combo"><select id="blend"><option>Normal</option></select></div></div>
        <hr>
        <div class="scale"><div class="bar"><input type="range" id="blur" min="0" max="100" value="0"><label for="blur">Blur (%)</label></div><input class="val" aria-label="Blur value" value="0.0"><button disabled aria-label="Less"><svg><use href="#minus"/></svg></button><button aria-label="More"><svg><use href="#plus"/></svg></button></div>
        <div class="scale full"><div class="bar"><input type="range" id="opac" min="0" max="100" value="100"><label for="opac">Opacity (%)</label></div><input class="val" aria-label="Opacity value" value="100.0"><button aria-label="Less"><svg><use href="#minus"/></svg></button><button disabled aria-label="More"><svg><use href="#plus"/></svg></button></div>
      </div>
    </section>

    <div class="tabs">
      <button><svg class="icon"><use href="#c-align"/></svg><span>Align and Distribute (Shift+Ctrl+A)</span><svg class="chev"><use href="#chev"/></svg></button>
      <button><svg class="icon"><use href="#c-export"/></svg><span>Export PNG Image (Shift+Ctrl+E)</span><svg class="chev"><use href="#chev"/></svg></button>
      <button><svg class="icon"><use href="#c-fill"/></svg><span>Fill and Stroke (Shift+Ctrl+F)</span><svg class="chev"><use href="#chev"/></svg></button>
      <button class="on"><svg class="icon"><use href="#layers"/></svg><span>Layers (Shift+Ctrl+L)</span><svg class="chev"><use href="#chev"/></svg></button>
      <button><svg class="icon"><use href="#objprop"/></svg><span>Object Properties (Shift+Ctrl+O)</span><svg class="chev"><use href="#chev"/></svg></button>
      <button><svg class="icon"><use href="#c-text"/></svg><span>Text and Font (Shift+Ctrl+T)</span><svg class="chev"><use href="#chev"/></svg></button>
      <button><svg class="icon"><use href="#c-xml"/></svg><span>XML Editor (Shift+Ctrl+X)</span><svg class="chev"><use href="#chev"/></svg></button>
    </div>

    <section class="dialog transform">
      <header><svg class="icon"><use href="#transform"/></svg><h2>Transform (Shift+Ctrl+M)</h2><button aria-label="Iconify"><svg><use href="#iconify"/></svg></button><button aria-label="Close"><svg><use href="#close-dlg"/></svg></button></header>
      <div class="frame">
        <div class="notebook">
          <div class="nbtabs"><button><u>M</u>ove</button><button class="cur"><u>S</u>cale</button><button><u>R</u>otate</button><button>Ske<u>w</u></button><button>Matri<u>x</u></button></div>
          <div class="row">
            <svg class="big" viewBox="0 0 24 24"><rect x=".8" y="3.800" width="22.400" height="16.500" fill="url(#gSky)" stroke="#222" stroke-width="1.300"/><path d="M8 4V20M16 4V20" stroke="#667"/><path d="M2 15.500H8M16 15.500H22" stroke="#000" stroke-width="1.200"/><path d="M5 12.500V18.500L1.500 15.500ZM19 12.500V18.500L22.500 15.500Z"/></svg>
            <label for="tw"><u>W</u>idth:</label>
            <div class="spin"><input id="tw" value="80.000"><button aria-label="Less"><svg><use href="#minus"/></svg></button><button aria-label="More"><svg><use href="#plus"/></svg></button></div>
            <div class="combo pct"><select aria-label="Unit"><option>%</option></select></div>
          </div>
          <div class="row">
            <svg class="big" viewBox="0 0 24 24"><rect x="3.800" y=".8" width="16.500" height="22.400" fill="url(#gSky)" stroke="#222" stroke-width="1.300"/><path d="M4 8H20M4 16H20" stroke="#667"/><path d="M15.500 2V8M15.500 16V22" stroke="#000" stroke-width="1.200"/><path d="M12.500 5H18.500L15.500 1.500ZM12.500 19H18.500L15.500 22.500Z"/></svg>
            <label for="th"><u>H</u>eight:</label>
            <div class="spin"><input id="th" value="80.000"><button aria-label="Less"><svg><use href="#minus"/></svg></button><button aria-label="More"><svg><use href="#plus"/></svg></button></div>
          </div>
          <label class="check"><input type="checkbox" checked><span><u>S</u>cale proportionally</span></label>
        </div>
        <label class="check"><input type="checkbox" checked><span>Apply to each <u>o</u>bject separately</span></label>
        <div class="actions"><button><u>C</u>lear</button><button><u>A</u>pply</button></div>
      </div>
    </section>
  </aside>

  <div class="strip">
    <button aria-label="New"><svg class="icon"><use href="#c-new"/></svg></button>
    <button aria-label="Open"><svg class="icon"><use href="#c-open"/></svg></button>
    <button aria-label="Save"><svg class="icon"><use href="#c-save"/></svg></button>
    <button aria-label="Print"><svg class="icon"><use href="#c-print"/></svg></button>
    <hr>
    <button aria-label="Import"><svg class="icon"><use href="#c-import"/></svg></button>
    <button aria-label="Export"><svg class="icon"><use href="#c-export"/></svg></button>
    <hr>
    <button aria-label="Undo"><svg class="icon"><use href="#c-undo"/></svg></button>
    <button aria-label="Redo"><svg class="icon"><use href="#c-redo"/></svg></button>
    <hr>
    <button aria-label="Copy"><svg class="icon"><use href="#c-copy"/></svg></button>
    <button aria-label="Cut"><svg class="icon"><use href="#c-cut"/></svg></button>
    <button aria-label="Paste"><svg class="icon"><use href="#c-paste"/></svg></button>
    <hr>
    <button aria-label="Zoom selection"><svg class="icon"><use href="#c-zsel"/></svg></button>
    <button aria-label="Zoom drawing"><svg class="icon"><use href="#c-zdraw"/></svg></button>
    <button aria-label="Zoom page"><svg class="icon"><use href="#c-zpage"/></svg></button>
    <button aria-label="Zoom width"><svg class="icon"><use href="#c-zwidth"/></svg></button>
    <hr>
    <button aria-label="Duplicate"><svg class="icon"><use href="#c-dup"/></svg></button>
    <button aria-label="Clone"><svg class="icon"><use href="#c-clone"/></svg></button>
    <button aria-label="Unlink clone"><svg class="icon"><use href="#c-unclone"/></svg></button>
    <hr>
    <button aria-label="Group"><svg class="icon"><use href="#c-group"/></svg></button>
    <button aria-label="Ungroup"><svg class="icon"><use href="#c-ungroup"/></svg></button>
    <hr>
    <button aria-label="Fill and stroke"><svg class="icon"><use href="#c-fill"/></svg></button>
    <button aria-label="Text and font"><svg class="icon"><use href="#c-text"/></svg></button>
    <button aria-label="Layers"><svg class="icon"><use href="#layers"/></svg></button>
    <button aria-label="XML editor"><svg class="icon"><use href="#c-xml"/></svg></button>
    <button aria-label="Align"><svg class="icon"><use href="#c-align"/></svg></button>
    <hr>
    <button aria-label="Document properties"><svg class="icon"><use href="#c-docprop"/></svg></button>
    <button aria-label="Preferences"><svg class="icon"><use href="#c-prefs"/></svg></button>
  </div>

  <div class="strip">
    <button class="on" aria-label="Enable snapping"><svg class="icon"><use href="#s-snap"/></svg></button>
    <hr>
    <button aria-label="Snap bounding boxes"><svg class="icon"><use href="#s-snap"/></svg></button>
    <button disabled aria-label="Snap box edges"><svg class="icon"><use href="#s-box"/></svg></button>
    <button disabled aria-label="Snap box corners"><svg class="icon"><use href="#s-box2"/></svg></button>
    <button disabled aria-label="Snap box midpoints"><svg class="icon"><use href="#s-box3"/></svg></button>
    <button disabled aria-label="Snap box centers"><svg class="icon"><use href="#s-box4"/></svg></button>
    <hr>
    <button class="on" aria-label="Snap nodes"><svg class="icon"><use href="#s-snap"/></svg></button>
    <button aria-label="Snap paths"><svg class="icon"><use href="#s-path"/></svg></button>
    <button aria-label="Snap intersections"><svg class="icon"><use href="#s-inter"/></svg></button>
    <button class="on" aria-label="Snap cusp nodes"><svg class="icon"><use href="#s-cusp"/></svg></button>
    <button aria-label="Snap smooth nodes"><svg class="icon"><use href="#s-smooth"/></svg></button>
    <button aria-label="Snap midpoints"><svg class="icon"><use href="#s-mid"/></svg></button>
    <hr>
    <button class="on" aria-label="Snap others"><svg class="icon"><use href="#s-snap"/></svg></button>
    <button aria-label="Snap object centers"><svg class="icon"><use href="#s-obj"/></svg></button>
    <button aria-label="Snap rotation centers"><svg class="icon"><use href="#s-rotc"/></svg></button>
    <button aria-label="Snap text"><svg class="icon"><use href="#s-text"/></svg></button>
    <hr>
    <button aria-label="Snap page border"><svg class="icon"><use href="#s-page"/></svg></button>
    <button class="on" aria-label="Snap grids"><svg class="icon"><use href="#s-grid"/></svg></button>
    <button class="on" aria-label="Snap guides"><svg class="icon"><use href="#s-guide"/></svg></button>
  </div>
</main>

<div class="palette">
  <div class="palbox">
    <div class="swatches" id="swatches"><button aria-label="None"><svg viewBox="0 0 19 21"><path d="M0 0L19 21M19 0L0 21" stroke="#700" stroke-width="1.300"/></svg></button></div>
    <div class="palscroll"><i></i></div>
  </div>
  <button class="palmenu" aria-label="Palette menu"><svg viewBox="0 0 5 10"><path d="M5 0V10L0 5Z" fill="#222"/></svg></button>
</div>

<footer class="status">
  <dl class="style"><dt>Fill:</dt><dd>N/A</dd><dt>Stroke:</dt><dd>N/A</dd></dl>
  <label for="so">O:</label>
  <div class="spin off opa"><input id="so" value="100" disabled><button disabled aria-label="Less"><svg><use href="#minus"/></svg></button><button disabled aria-label="More"><svg><use href="#plus"/></svg></button></div>
  <i class="vsep"></i>
  <button class="tool on" aria-label="Layer visibility"><svg class="icon"><use href="#eye-closed"/></svg></button>
  <button class="tool" aria-label="Layer lock"><svg class="icon"><use href="#lock-open"/></svg></button>
  <div class="combo layer"><select aria-label="Current layer"><option>•Hole Sizes</option></select></div>
  <p>No objects selected. Click, Shift+click, Alt+scroll mouse on top of objects, or drag around objects to select.</p>
  <dl class="coords"><dt>X:</dt><dd>34.17</dd><dt>Y:</dt><dd>54.58</dd></dl>
  <label for="zz">Z:</label>
  <div class="spin wide zoom"><input id="zz" value="240%"><button aria-label="Less"><svg><use href="#minus"/></svg></button><button aria-label="More"><svg><use href="#plus"/></svg></button></div>
  <label for="rr">R:</label>
  <div class="spin wide rot"><input id="rr" value="0.00°"><button aria-label="Less"><svg><use href="#minus"/></svg></button><button aria-label="More"><svg><use href="#plus"/></svg></button></div>
</footer>
<script src="app.js"></script>
</body>
</html>
```
FILE: styles.css
```css
* { box-sizing: border-box; }

:root {
  --bg: #f6f5f4;
  --line: #cdc7c2;
  --soft: #dddad7;
  --on: #d6d1cd;
  --ink: #2e3436;
  --blue: #3584e4;
  --trough: #cecece;
  --thumb: #7e8181;
}

body {
  margin: 0;
  height: 100vh;
  display: flex;
  flex-direction: column;
  overflow: hidden;
  background: var(--bg);
  border: 1px solid #70431f;
  border-top: 0;
  font: 11px/16px "Open Sans", "Noto Sans", sans-serif;
  color: var(--ink);
}

.defs { position: absolute; width: 0; height: 0; }
button, input, select { font: inherit; color: inherit; margin: 0; padding: 0; border: 0; background: none; border-radius: 0; }
h1, h2, p, ul, dl, dd { margin: 0; padding: 0; font: inherit; }
ul { list-style: none; }
svg { display: block; flex: none; }
u { text-underline-offset: 2px; }
hr { margin: 0; border: 0; border-top: 1px solid var(--soft); }
.icon { width: 16px; height: 16px; }
.grow { flex: 1; }

/* title bar */
.titlebar { flex: none; display: flex; align-items: center; height: 31px; margin: 0 -1px; padding-left: 9px; gap: 5px; background: #6a350b; border-top: 1px solid #7d4a22; color: #fff; }
.titlebar h1 { flex: 1; }
.winbtns { display: flex; padding-right: 2px; }
.winbtns button { width: 45px; height: 30px; display: grid; place-items: center; }
.winbtns svg { width: 10px; height: 10px; fill: none; stroke: #fff; overflow: visible; }

/* menu bar */
.menubar { flex: none; display: flex; height: 24px; border-bottom: 1px solid var(--soft); }
.menubar button { padding: 1px 8px 0; }

/* shared widgets */
.tool { width: 36px; height: 34px; display: grid; place-items: center; border-radius: 5px; flex: none; }
.tool:disabled svg { opacity: .35; }
.on { background: var(--on); box-shadow: inset 0 0 0 1px #cdc7c2; }
.vsep { width: 1px; height: 34px; background: var(--soft); margin: 0 6px; flex: none; }
.dim { color: #929595; }

.spin { display: flex; width: 116px; height: 34px; border: 1px solid var(--line); border-radius: 5px; background: #fff; overflow: hidden; flex: none; color: #000; font-size: 12px; }
.spin.short { width: 111px; }
.spin input { flex: 1; min-width: 0; padding-left: 2px; }
.spin button { width: 17px; border-left: 1px solid #e4e2e0; display: grid; place-items: center; color: var(--ink); }
.spin svg, .scale svg { width: 10px; height: 10px; }
.spin.off { background: #faf9f8; color: #929595; }
.spin.off button { color: #d5d3d1; }
.spin.wide button { width: 21px; }

.combo { display: grid; align-items: center; height: 34px; flex: none; }
.combo select { grid-area: 1 / 1; width: 100%; height: 34px; padding: 0 11px; appearance: none; border: 1px solid var(--line); border-bottom-color: #bfb8b1; border-radius: 5px; background: linear-gradient(#f8f7f6, #edebe9); box-shadow: 0 1px 1px #0000000d; }
.combo::after { content: ""; grid-area: 1 / 1; justify-self: end; margin-right: 13px; border: 5px solid transparent; border-top: 6px solid var(--ink); border-bottom: 0; z-index: 1; pointer-events: none; }

/* control bar */
.toolbar { flex: none; display: flex; align-items: center; gap: 1px; height: 42px; padding-left: 4px; }
.toolbar label { padding: 0 3px 0 7px; }
.toolbar .vsep + label { padding-left: 3px; }
.toolbar .lockwh { margin: 0 3px 0 3px; }
.toolbar .lockwh + label { padding-left: 0; }
.unit { width: 58px; margin-left: 4px; }

/* work area */
.work { flex: 1; min-height: 0; display: flex; }

.toolbox { width: 52px; padding: 3px 5px 0 4px; flex: none; }
.toolbox button { width: 42px; height: 34px; display: grid; place-items: center; border-radius: 5px; }
.toolbox svg { width: 22px; height: 22px; }
.toolbox hr, .strip hr { margin: 6px 0 7px; }

.desk { flex: 1; min-width: 0; display: grid; grid-template: 18px 1fr 18px / 18px 1fr 18px; border-right: 1px solid var(--line); }
.corner { display: grid; place-items: center; border: 1px solid #c4bfba; border-radius: 4px; background: #f4f2f1; overflow: hidden; }
.faded { opacity: .5; }

.ruler-h, .ruler-v { position: relative; overflow: hidden; min-width: 0; min-height: 0; font-size: 9px; line-height: 8px; }
.ruler-h {
  border-bottom: 1px solid #222;
  background:
    linear-gradient(90deg, #333 1px, transparent 1px) 40px 0 / 60px 17px repeat-x,
    linear-gradient(90deg, #333 1px, transparent 1px) 10px 100% / 30px 9px repeat-x,
    linear-gradient(90deg, #333 1px, transparent 1px) 4px 100% / 6px 5px repeat-x;
}
.ruler-h .labels { display: flex; padding: 3px 0 0 42px; }
.ruler-h span { flex: none; width: 60px; }
.ruler-v {
  border-right: 1px solid #222;
  background:
    linear-gradient(#333 1px, transparent 1px) 0 23px / 17px 60px repeat-y,
    linear-gradient(#333 1px, transparent 1px) 100% 23px / 9px 30px repeat-y,
    linear-gradient(#333 1px, transparent 1px) 100% 5px / 5px 6px repeat-y;
}
.ruler-v .labels { padding: 25px 0 0 6px; }
.ruler-v span { display: block; width: 5px; height: 60px; word-break: break-all; }
.mark { position: absolute; border: 4px solid transparent; }
.ruler-h .mark { left: 298px; bottom: 0; border-top: 5px solid #222; border-bottom: 0; }
.ruler-v .mark { right: 0; top: 150px; border-left: 5px solid #222; border-right: 0; }

.canvas { position: relative; background: #fff; overflow: hidden; }
.sheet { position: absolute; left: 220px; top: 23px; width: 563px; height: 1062px; background: #ff0; border: 1px solid #7a7a10; }
.scroll-v, .scroll-h { background: var(--trough); }
.scroll-v i { display: block; width: 6px; height: 36%; margin: 359px auto 0; border-radius: 3px; background: var(--thumb); }
.scroll-h { display: flex; align-items: center; }
.scroll-h i { width: 571px; height: 6px; margin-left: 232px; border-radius: 3px; background: var(--thumb); }

/* dock */
.dock { width: 477px; flex: none; }
.dialog header { display: flex; align-items: center; height: 34px; gap: 1px; }
.dialog h2 { flex: 1; }
.dialog header button { width: 36px; height: 24px; display: grid; place-items: center; align-self: start; }
.dialog header button svg { width: 12px; height: 12px; }
.dialog .frame { border: 1px solid var(--line); padding: 3px; }
.layers { background: #fff; }
.layers .frame { padding-bottom: 4px; }
.layerlist { height: 312px; border: 1px solid var(--line); color: #000; }
.layerlist li { display: flex; align-items: center; height: 26px; padding-left: 6px; gap: 11px; }
.layerlist span { padding-left: 16px; }
.layerlist .sel { background: var(--blue); color: #fff; }
.layerbtns { display: flex; height: 34px; }
.layerbtns button { width: 36px; display: grid; place-items: center; }
.blend { display: flex; justify-content: flex-end; align-items: center; gap: 11px; padding: 5px 10px 8px 0; }
.blend .combo { width: 106px; }
.layers hr { margin-bottom: 9px; }
.scale { display: flex; height: 32px; }
.bar { flex: 1; display: grid; align-items: center; color: #000; }
.bar input { grid-area: 1 / 1; appearance: none; width: 100%; height: 32px; background: #e1dedb; border: 1px solid var(--line); border-left: 2px solid #1b5fb8; border-radius: 3px; }
.bar input::-webkit-slider-thumb { appearance: none; width: 1px; height: 1px; }
.bar label { grid-area: 1 / 1; padding-left: 5px; z-index: 1; pointer-events: none; }
.full .bar { color: #fff; }
.full .bar input { background: var(--blue); border: 1px solid #1b5fb8; }
.scale .val { width: 34px; padding-left: 2px; font-size: 12px; color: #000; }
.scale button { width: 17px; border-left: 1px solid #ebe9e7; display: grid; place-items: center; }
.scale button:disabled { color: #d5d3d1; }

.tabs { padding-bottom: 1px; border-bottom: 1px solid var(--line); }
.tabs button { display: flex; align-items: center; width: 100%; height: 34px; padding: 0 12px 0 9px; gap: 3px; border: 1px solid var(--line); border-bottom-color: #b5afa9; background: linear-gradient(#f8f7f6, #ebe9e7); text-align: left; }
.tabs button:first-child { border-radius: 5px 5px 0 0; }
.tabs button:last-child { border-radius: 0 0 5px 5px; }
.tabs span { flex: 1; }
.tabs button.on { background: var(--on); }
.chev { width: 10px; height: 10px; }

.transform .frame { border-bottom-width: 2px; }
.notebook { background: #fff; border: 1px solid var(--line); padding-bottom: 2px; }
.nbtabs { display: flex; gap: 7px; height: 37px; padding-left: 8px; background: #e1dedb; border-bottom: 1px solid var(--line); }
.nbtabs button { padding: 0 13px; border-bottom: 4px solid transparent; border-top: 4px solid transparent; }
.nbtabs .cur { border-bottom-color: var(--blue); }
.row { display: flex; align-items: center; padding: 4px 0 0 10px; }
.big { width: 24px; height: 24px; }
.row label { width: 45px; margin-left: 6px; }
.pct { width: 60px; margin-left: 10px; }
.check { display: flex; align-items: center; gap: 4px; height: 20px; padding-left: 4px; }
.notebook .check { padding-left: 8px; margin: 4px 0 2px; }
.check input { appearance: none; width: 16px; height: 16px; border-radius: 3px; background: var(--blue); display: grid; place-items: center; }
.check input::before { content: ""; width: 10px; height: 5px; border: solid #fff; border-width: 0 0 3px 3px; transform: rotate(-45deg); margin-bottom: 3px; }
.actions { display: flex; justify-content: flex-end; gap: 6px; padding: 4px 4px 3px; }
.actions button { width: 85px; height: 34px; border: 1px solid var(--line); border-bottom-color: #bfb8b1; border-radius: 5px; background: linear-gradient(#f8f7f6, #edebe9); box-shadow: 0 1px 1px #0000000d; }

/* command and snap strips */
.strip { flex: none; display: flex; flex-direction: column; width: 44px; padding: 4px 3px 0 5px; }
.strip + .strip { width: 45px; padding: 4px 4px 0 5px; }
.strip button { flex: none; width: 36px; height: 34px; margin-bottom: 1px; display: grid; place-items: center; border-radius: 5px; }
.strip button:disabled svg { opacity: .3; }

/* palette */
.palette { flex: none; display: flex; height: 34px; }
.palbox { flex: 1; min-width: 0; background: var(--trough); }
.swatches { display: flex; height: 21px; overflow: hidden; }
.swatches button { flex: none; width: 19px; height: 21px; }
.swatches button:first-child { background: #fff; }
.palscroll { padding: 4px 3px; }
.palscroll i { display: block; width: 322px; height: 6px; border-radius: 3px; background: var(--thumb); }
.palmenu { width: 36px; display: grid; place-items: center; }
.palmenu svg { width: 5px; height: 10px; }

/* status bar */
.status { flex: none; display: flex; align-items: center; height: 34px; padding-right: 10px; font-size: 12px; }
.status dl { display: grid; grid-template-columns: auto auto; line-height: 17px; }
.status .style { width: 66px; padding: 0 2px; font-size: 11px; }
.status label { font-size: 11px; }
.status dd { text-align: right; }
.opa { width: 68px; margin-left: 3px; }
.status .vsep { margin: 0 1px 0 42px; }
.layer { width: 150px; }
.layer select { font-size: 11px; font-weight: 600; color: #75787a; }
.status p { flex: 1; padding-left: 1px; }
.status .coords { width: 82px; height: 34px; padding: 0 10px; margin-right: 0; border-left: 1px solid var(--soft); }
.zoom { width: 94px; margin: 0 10px 0 10px; }
.rot { width: 101px; margin-left: 10px; }
.spin.wide input { text-align: right; padding-right: 8px; }
```
FILE: app.js
```js
// Ruler labels: one every 25 units.
function fill(id, from, to) {
  const box = document.getElementById(id);
  for (let n = from; n <= to; n += 25) {
    const s = document.createElement('span');
    s.textContent = n;
    box.append(s);
  }
}
fill('hlabels', -75, 325);
fill('vlabels', 0, 450);

// Inkscape default palette.
const colors = ('000000 1a1a1a 333333 4d4d4d 666666 808080 999999 b3b3b3 cccccc e6e6e6 ececec f2f2f2 f9f9f9 ffffff ' +
  '800000 ff0000 808000 ffff00 008000 00ff00 008080 00ffff 000080 0000ff 800080 ff00ff ' +
  '2b0000 550000 800000 aa0000 d40000 ff0000 ff2a2a ff5555 ff8080 ffaaaa ffd5d5 ' +
  '280b0b 501616 782121 a02c2c c83737 d35f5f de8787 e9afaf f4d7d7 ' +
  '241c1c 483737 6c5353 916f6f ac9393 c8b7b7 e3dbdb ' +
  '2b1100 552200 803300 aa4400 d45500 ff6600 ff7f2a ff9955 ffb380 ffccaa ffe6d5 ' +
  '28170b 502d16 784421 a05a2c c87137 d38d5f deaa87 e9c6af f4e3d7 ' +
  '241f1c 483e37 6c5d53 917c6f ac9d93 c8beb7 e3dedb ' +
  '2b2200 554400 806600 aa8800 d4aa00 ffcc00').split(' ');
const swatches = document.getElementById('swatches');
for (const c of colors) {
  const b = document.createElement('button');
  b.style.background = '#' + c;
  b.setAttribute('aria-label', '#' + c);
  swatches.append(b);
}
```
